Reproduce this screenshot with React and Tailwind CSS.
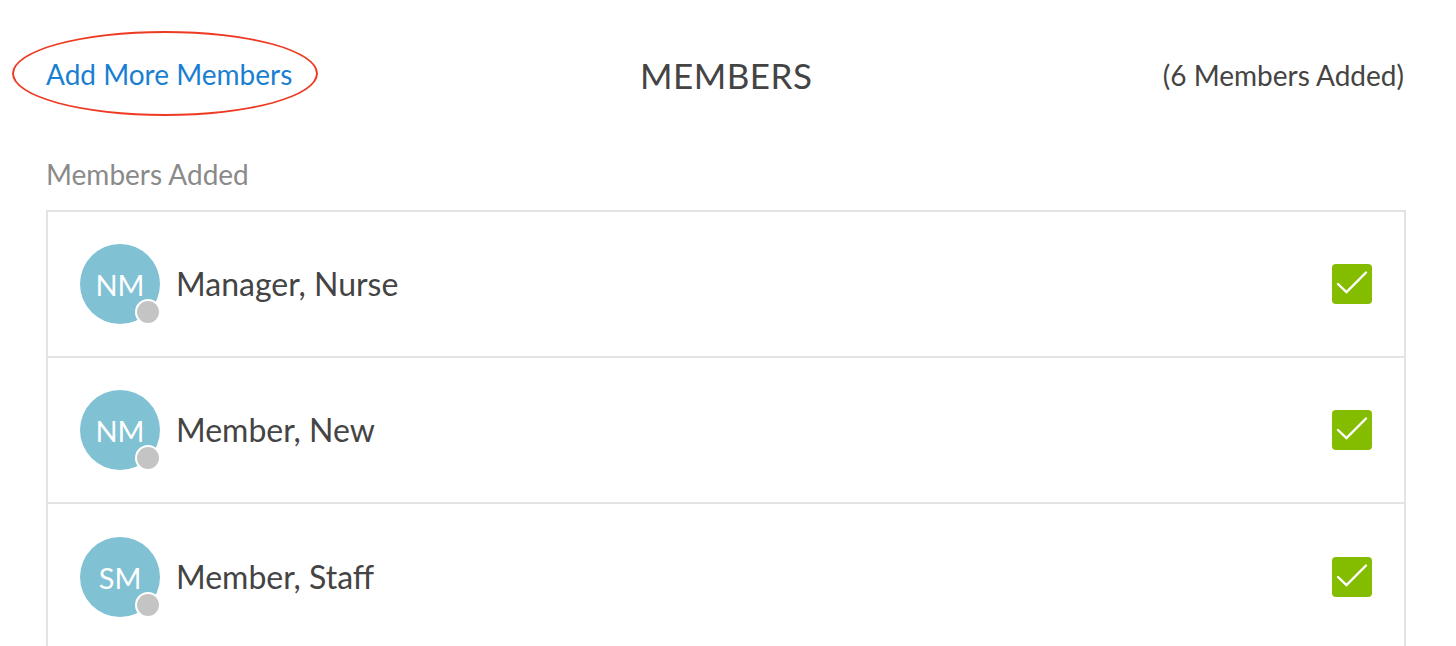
import React from 'react';

const members = [
  { initials: 'NM', name: 'Manager, Nurse' },
  { initials: 'NM', name: 'Member, New' },
  { initials: 'SM', name: 'Member, Staff' },
];

const CheckBox = () => (
  <div className="w-10 h-10 rounded-[4px] bg-[#84bd00] flex items-center justify-center">
    <svg width="40" height="40" viewBox="0 0 40 40" fill="none">
      <path d="M6 20 L14.5 28 L34 8.5" stroke="#fff" strokeWidth="2.4" strokeLinecap="round" strokeLinejoin="miter" />
    </svg>
  </div>
);

const MemberRow = ({ member, last }) => (
  <div className={`h-[146px] flex items-center pl-8 pr-8 ${last ? '' : 'border-b-2 border-[#e3e3e3]'}`}>
    <div className="relative w-20 h-20 shrink-0">
      <div className="w-20 h-20 rounded-full bg-[#80c1d3] flex items-center justify-center text-white text-[29px] leading-none">
        {member.initials}
      </div>
      {/* status dot */}
      <div className="absolute left-[55px] top-[55px] w-[26px] h-[26px] rounded-full bg-white flex items-center justify-center">
        <div className="w-[22px] h-[22px] rounded-full bg-[#c4c4c4]" />
      </div>
    </div>
    <div className="ml-4 text-[32px] text-[#444] leading-none">{member.name}</div>
    <div className="ml-auto">
      <CheckBox />
    </div>
  </div>
);

export default function App() {
  return (
    <div className="w-[1456px] h-[646px] overflow-hidden bg-white font-['Lato','Open_Sans',sans-serif]">
      <div className="pl-[46px] pr-[52px]">
        <div className="h-[150px] flex items-center justify-between relative">
          <div className="relative">
            <a className="text-[#1b7fd1] text-[28px] leading-none pb-[2px] block">Add More Members</a>
            <div className="absolute left-[-34px] top-[-29px] w-[306px] h-[85px] rounded-[50%] border-[2.5px] border-[#ee3a22]" />
          </div>
          <h1 className="absolute left-[594px] text-[35px] text-[#444] tracking-[0.5px] leading-none">MEMBERS</h1>
          <div className="text-[28px] text-[#444] leading-none">(6 Members Added)</div>
        </div>
        <div className="text-[28px] text-[#8a8a8a] leading-none mt-[10px] mb-[22px]">Members Added</div>
        <div className="w-[1360px] border-2 border-[#e3e3e3]">
          {members.map((m, i) => (
            <MemberRow key={i} member={m} last={i === members.length - 1} />
          ))}
        </div>
      </div>
    </div>
  );
}
